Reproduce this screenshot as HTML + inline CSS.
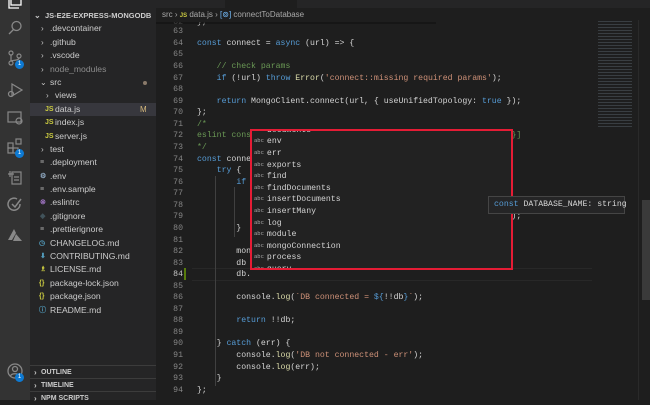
<!DOCTYPE html>
<html><head><style>
*{margin:0;padding:0;box-sizing:border-box}
body{width:650px;height:400px;overflow:hidden;background:#1e1e1e;position:relative;font-family:"Liberation Sans",sans-serif}
.ab{position:absolute;left:0;top:0;width:30px;height:400px;background:#333}
.ab svg{position:absolute;left:7px}
.badge{position:absolute;width:9px;height:9px;border-radius:50%;background:#0e7ad3;color:#fff;font-size:6px;text-align:center;line-height:9px}
.sb{position:absolute;left:30px;top:0;width:126px;height:400px;background:#252526;color:#ccc;font-size:8.6px}
.r{position:absolute;left:0;width:126px;height:13px;line-height:13px;white-space:nowrap}
.ch{position:absolute;color:#c5c5c5;font-size:8px}
.ic{position:absolute;font-size:7px;font-weight:bold}
.ed{position:absolute;left:156px;top:0;width:494px;height:400px;background:#1e1e1e}
.code{position:absolute;left:0;top:0;font-family:"Liberation Mono",monospace;font-size:8.2px;color:#d4d4d4}
.ln{position:absolute;left:0;width:27px;text-align:right;color:#858585;white-space:pre}
.tx{position:absolute;left:41px;white-space:pre}
.k{color:#569cd6}.s{color:#ce9178}.c{color:#6a9955}.f{color:#dcdcaa}.v{color:#9cdcfe}.kc{color:#c586c0}
.pop{position:absolute;left:250px;top:129px;width:263px;height:141px;background:#222;border:2px solid #e51c35;overflow:hidden;font-family:"Liberation Mono",monospace;font-size:8.2px;color:#d4d4d4}
.pi{position:absolute;left:2px;white-space:pre}
.pi b{font-size:5.5px;color:#aaa;font-weight:normal;margin-right:3px;vertical-align:1px}
.tip{position:absolute;left:488px;top:196px;width:137px;height:18px;background:#252526;border:1px solid #454545;font-family:'Liberation Mono',monospace;font-size:8.2px;color:#d4d4d4;line-height:16px;padding-left:5px;white-space:pre;z-index:5}
</style></head><body>
<div class="ab">
<svg style="top:-6px" width="16" height="16" viewBox="0 0 16 16" fill="none" stroke="#fff" stroke-width="1.3"><rect x="4" y="1" width="10" height="10"/><path d="M2 4v10h10"/></svg>
<svg style="top:20px" width="16" height="16" viewBox="0 0 16 16" fill="none" stroke="#888" stroke-width="1.3"><circle cx="9.5" cy="6" r="4.5"/><path d="M6.5 9.5L2 14"/></svg>
<svg style="top:50px" width="16" height="16" viewBox="0 0 16 16" fill="none" stroke="#888" stroke-width="1.2"><circle cx="4" cy="3" r="2"/><circle cx="4" cy="13" r="2"/><circle cx="12" cy="6" r="2"/><path d="M4 5v6M12 8c0 3-8 2-8 3"/></svg>
<div class="badge" style="left:15px;top:60px">1</div>
<svg style="top:82px" width="16" height="16" viewBox="0 0 16 16" fill="none" stroke="#888" stroke-width="1.2"><path d="M5 2l10 6-10 6z"/><circle cx="4" cy="12" r="2.5"/></svg>
<svg style="top:110px" width="16" height="16" viewBox="0 0 16 16" fill="none" stroke="#888" stroke-width="1.2"><rect x="1" y="2" width="13" height="10"/><circle cx="12" cy="11" r="3"/></svg>
<svg style="top:138px" width="16" height="16" viewBox="0 0 16 16" fill="none" stroke="#888" stroke-width="1.2"><rect x="1" y="5" width="5" height="5"/><rect x="1" y="10" width="5" height="5"/><rect x="6" y="10" width="5" height="5"/><rect x="9" y="1" width="5" height="5"/></svg>
<div class="badge" style="left:15px;top:149px">1</div>
<svg style="top:169px" width="16" height="16" viewBox="0 0 16 16" fill="none" stroke="#888" stroke-width="1.2"><rect x="5" y="3" width="9" height="12"/><path d="M1 5h6M7 8h5M7 11h5M3 2v6"/></svg>
<svg style="top:196px" width="16" height="16" viewBox="0 0 16 16" fill="none" stroke="#888" stroke-width="1.5"><path d="M13 8a6 6 0 1 1-3-5"/><path d="M5 8l3 3 6-8"/></svg>
<svg style="top:228px" width="16" height="14" viewBox="0 0 16 14" fill="#888"><path d="M7 1L1 12h4l4-7zM9 6l-3 7h9z"/></svg>
<svg style="top:363px" width="16" height="16" viewBox="0 0 16 16" fill="none" stroke="#888" stroke-width="1.3"><circle cx="8" cy="8" r="7"/><circle cx="8" cy="6" r="2.5"/><path d="M3.5 13c1-3 8-3 9 0"/></svg>
<div class="badge" style="left:15px;top:373px">1</div>
</div>
<div class="sb">
<div class="r" style="top:9px;font-weight:bold;font-size:7.5px;left:4px"><span class="ch" style="left:0">⌄</span><span style="position:absolute;left:11px">JS-E2E-EXPRESS-MONGODB</span></div>
<div class="r" style="top:22px"><span class="ch" style="left:11px">›</span><span style="position:absolute;left:20px">.devcontainer</span></div>
<div class="r" style="top:36px"><span class="ch" style="left:11px">›</span><span style="position:absolute;left:20px">.github</span></div>
<div class="r" style="top:49px"><span class="ch" style="left:11px">›</span><span style="position:absolute;left:20px">.vscode</span></div>
<div class="r" style="top:63px;color:#8c8c8c"><span class="ch" style="left:11px">›</span><span style="position:absolute;left:20px">node_modules</span></div>
<div class="r" style="top:76px"><span class="ch" style="left:10px">⌄</span><span style="position:absolute;left:20px">src</span><span style="position:absolute;left:113px;top:5px;width:4px;height:4px;border-radius:50%;background:#8a7a6a"></span></div>
<div class="r" style="top:89px"><span class="ch" style="left:16px">›</span><span style="position:absolute;left:25px">views</span></div>
<div class="r" style="top:103px;background:#37373d"><span class="ic" style="left:15px;color:#cbcb41">JS</span><span style="position:absolute;left:25px">data.js</span><span style="position:absolute;left:110px;color:#d7ba7d;font-size:8px">M</span></div>
<div class="r" style="top:116px"><span class="ic" style="left:15px;color:#cbcb41">JS</span><span style="position:absolute;left:25px">index.js</span></div>
<div class="r" style="top:130px"><span class="ic" style="left:15px;color:#cbcb41">JS</span><span style="position:absolute;left:25px">server.js</span></div>
<div class="r" style="top:143px"><span class="ch" style="left:11px">›</span><span style="position:absolute;left:20px">test</span></div>
<div class="r" style="top:156px"><span class="ic" style="left:10px;color:#aaa">≡</span><span style="position:absolute;left:20px">.deployment</span></div>
<div class="r" style="top:170px"><span class="ic" style="left:10px;color:#8fa8c0">⚙</span><span style="position:absolute;left:20px">.env</span></div>
<div class="r" style="top:183px"><span class="ic" style="left:10px;color:#aaa">≡</span><span style="position:absolute;left:20px">.env.sample</span></div>
<div class="r" style="top:196px"><span class="ic" style="left:10px;color:#a074c4">⊗</span><span style="position:absolute;left:20px">.eslintrc</span></div>
<div class="r" style="top:210px"><span class="ic" style="left:10px;color:#41535b">◆</span><span style="position:absolute;left:20px">.gitignore</span></div>
<div class="r" style="top:223px"><span class="ic" style="left:10px;color:#aaa">≡</span><span style="position:absolute;left:20px">.prettierignore</span></div>
<div class="r" style="top:237px"><span class="ic" style="left:9px;color:#519aba">◷</span><span style="position:absolute;left:20px">CHANGELOG.md</span></div>
<div class="r" style="top:250px"><span class="ic" style="left:10px;color:#519aba">⬇</span><span style="position:absolute;left:20px">CONTRIBUTING.md</span></div>
<div class="r" style="top:263px"><span class="ic" style="left:10px;color:#cbcb41">♗</span><span style="position:absolute;left:20px">LICENSE.md</span></div>
<div class="r" style="top:277px"><span class="ic" style="left:9px;color:#cbcb41">{}</span><span style="position:absolute;left:20px">package-lock.json</span></div>
<div class="r" style="top:290px"><span class="ic" style="left:9px;color:#cbcb41">{}</span><span style="position:absolute;left:20px">package.json</span></div>
<div class="r" style="top:304px"><span class="ic" style="left:9px;color:#519aba">ⓘ</span><span style="position:absolute;left:20px">README.md</span></div>
<div class="r" style="top:365px;border-top:1px solid #3c3c3c;font-weight:bold;font-size:7px"><span class="ch" style="left:4px">›</span><span style="position:absolute;left:11px">OUTLINE</span></div>
<div class="r" style="top:378px;border-top:1px solid #3c3c3c;font-weight:bold;font-size:7px"><span class="ch" style="left:4px">›</span><span style="position:absolute;left:11px">TIMELINE</span></div>
<div class="r" style="top:391px;border-top:1px solid #3c3c3c;font-weight:bold;font-size:7px"><span class="ch" style="left:4px">›</span><span style="position:absolute;left:11px">NPM SCRIPTS</span></div>
</div>
<div class="ed">
<div class="code">
<div class="ln" style="top:18px">62</div><div class="tx" style="top:18px">};</div>
<div class="ln" style="top:27px">63</div>
<div class="ln" style="top:39px">64</div><div class="tx" style="top:39px"><span class="k">const</span> connect = <span class="k">async</span> (url) => {</div>
<div class="ln" style="top:50px">65</div>
<div class="ln" style="top:62px">66</div><div class="tx" style="top:62px">    <span class="c">// check params</span></div>
<div class="ln" style="top:74px">67</div><div class="tx" style="top:74px">    <span class="k">if</span> (!url) <span class="k">throw</span> <span class="f">Error</span>(<span class="s">'connect::missing required params'</span>);</div>
<div class="ln" style="top:85px">68</div>
<div class="ln" style="top:97px">69</div><div class="tx" style="top:97px">    <span class="k">return</span> MongoClient.connect(url, { useUnifiedTopology: <span class="k">true</span> });</div>
<div class="ln" style="top:108px">70</div><div class="tx" style="top:108px">};</div>
<div class="ln" style="top:120px">71</div><div class="tx c" style="top:120px">/*</div>
<div class="ln" style="top:131px">72</div><div class="tx c" style="top:131px">eslint cons                                                   e }]</div>
<div class="ln" style="top:143px">73</div><div class="tx c" style="top:143px">*/</div>
<div class="ln" style="top:155px">74</div><div class="tx" style="top:155px"><span class="k">const</span> conne</div>
<div class="ln" style="top:166px">75</div><div class="tx" style="top:166px">    <span class="k">try</span> {</div>
<div class="ln" style="top:178px">76</div><div class="tx" style="top:178px">        <span class="k">if</span></div>
<div class="ln" style="top:189px">77</div>
<div class="ln" style="top:201px">78</div>
<div class="ln" style="top:212px">79</div><div class="tx" style="top:212px">                                                      ASE_NAME}`);</div>
<div class="ln" style="top:224px">80</div><div class="tx" style="top:224px">        }</div>
<div class="ln" style="top:236px">81</div>
<div class="ln" style="top:247px">82</div><div class="tx" style="top:247px">        mon</div>
<div class="ln" style="top:259px">83</div><div class="tx" style="top:259px">        db</div>
<div class="ln" style="top:270px;color:#c6c6c6">84</div><div class="tx" style="top:270px">        db.</div>
<div class="ln" style="top:282px">85</div>
<div class="ln" style="top:293px">86</div><div class="tx" style="top:293px">        console.<span class="f">log</span>(<span class="s">`DB connected = </span><span class="k">${</span>!!db<span class="k">}</span><span class="s">`</span>);</div>
<div class="ln" style="top:305px">87</div>
<div class="ln" style="top:316px">88</div><div class="tx" style="top:316px">        <span class="k">return</span> !!db;</div>
<div class="ln" style="top:328px">89</div>
<div class="ln" style="top:339px">90</div><div class="tx" style="top:339px">    } <span class="k">catch</span> (err) {</div>
<div class="ln" style="top:351px">91</div><div class="tx" style="top:351px">        console.<span class="f">log</span>(<span class="s">'DB not connected - err'</span>);</div>
<div class="ln" style="top:363px">92</div><div class="tx" style="top:363px">        console.<span class="f">log</span>(err);</div>
<div class="ln" style="top:374px">93</div><div class="tx" style="top:374px">    }</div>
<div class="ln" style="top:386px">94</div><div class="tx" style="top:386px">};</div>
</div>
<div style="position:absolute;left:0;top:0;width:494px;height:8px;background:#252526"></div>
<div style="position:absolute;left:69px;top:0;width:72px;height:8px;background:#1e1e1e"></div>
<div style="position:absolute;top:8px;height:14px;width:494px;line-height:14px;font-size:8px;color:#a9a9a9;left:0;padding-left:6px;white-space:nowrap;background:#1e1e1e">src › <span style="color:#cbcb41;font-size:6px;font-weight:bold">JS</span> data.js › <span style="color:#75beff">[⊚]</span> connectToDatabase</div>
<div style="position:absolute;left:0;top:22px;width:280px;height:2px;background:#111;opacity:.6"></div>
<div style="position:absolute;left:28px;top:268px;width:2px;height:12px;background:#587c0c"></div>
<div style="position:absolute;left:36px;top:268px;width:400px;height:13px;border-top:1px solid #282828;border-bottom:1px solid #282828"></div>
<div style="position:absolute;left:59px;top:176px;width:1px;height:210px;background:#404040"></div>
<div style="position:absolute;left:78px;top:187px;width:1px;height:50px;background:#404040"></div>
<div style="position:absolute;left:482px;top:20px;width:12px;height:380px;background:#1e1e1e;border-left:1px solid #2a2a2a"></div>
<div style="position:absolute;left:486px;top:200px;width:8px;height:100px;background:#3a3a3a"></div>
<div style="position:absolute;left:442px;top:20px;width:34px;height:108px;opacity:.25;background:repeating-linear-gradient(#1e1e1e 0 1px,#8aa0b0 1px 2px,#1e1e1e 2px 3px)"></div>
</div>
<div class="pop">
<div class="pi" style="top:-5px"><b>abc</b>documents</div>
<div class="pi" style="top:6px"><b>abc</b>env</div>
<div class="pi" style="top:18px"><b>abc</b>err</div>
<div class="pi" style="top:30px"><b>abc</b>exports</div>
<div class="pi" style="top:41px"><b>abc</b>find</div>
<div class="pi" style="top:53px"><b>abc</b>findDocuments</div>
<div class="pi" style="top:64px"><b>abc</b>insertDocuments</div>
<div class="pi" style="top:76px"><b>abc</b>insertMany</div>
<div class="pi" style="top:88px"><b>abc</b>log</div>
<div class="pi" style="top:99px"><b>abc</b>module</div>
<div class="pi" style="top:111px"><b>abc</b>mongoConnection</div>
<div class="pi" style="top:122px"><b>abc</b>process</div>
<div class="pi" style="top:134px"><b>abc</b>query</div>
</div>
<div class="tip"><span class="k">const</span> DATABASE_NAME: string</div>
</body></html>
